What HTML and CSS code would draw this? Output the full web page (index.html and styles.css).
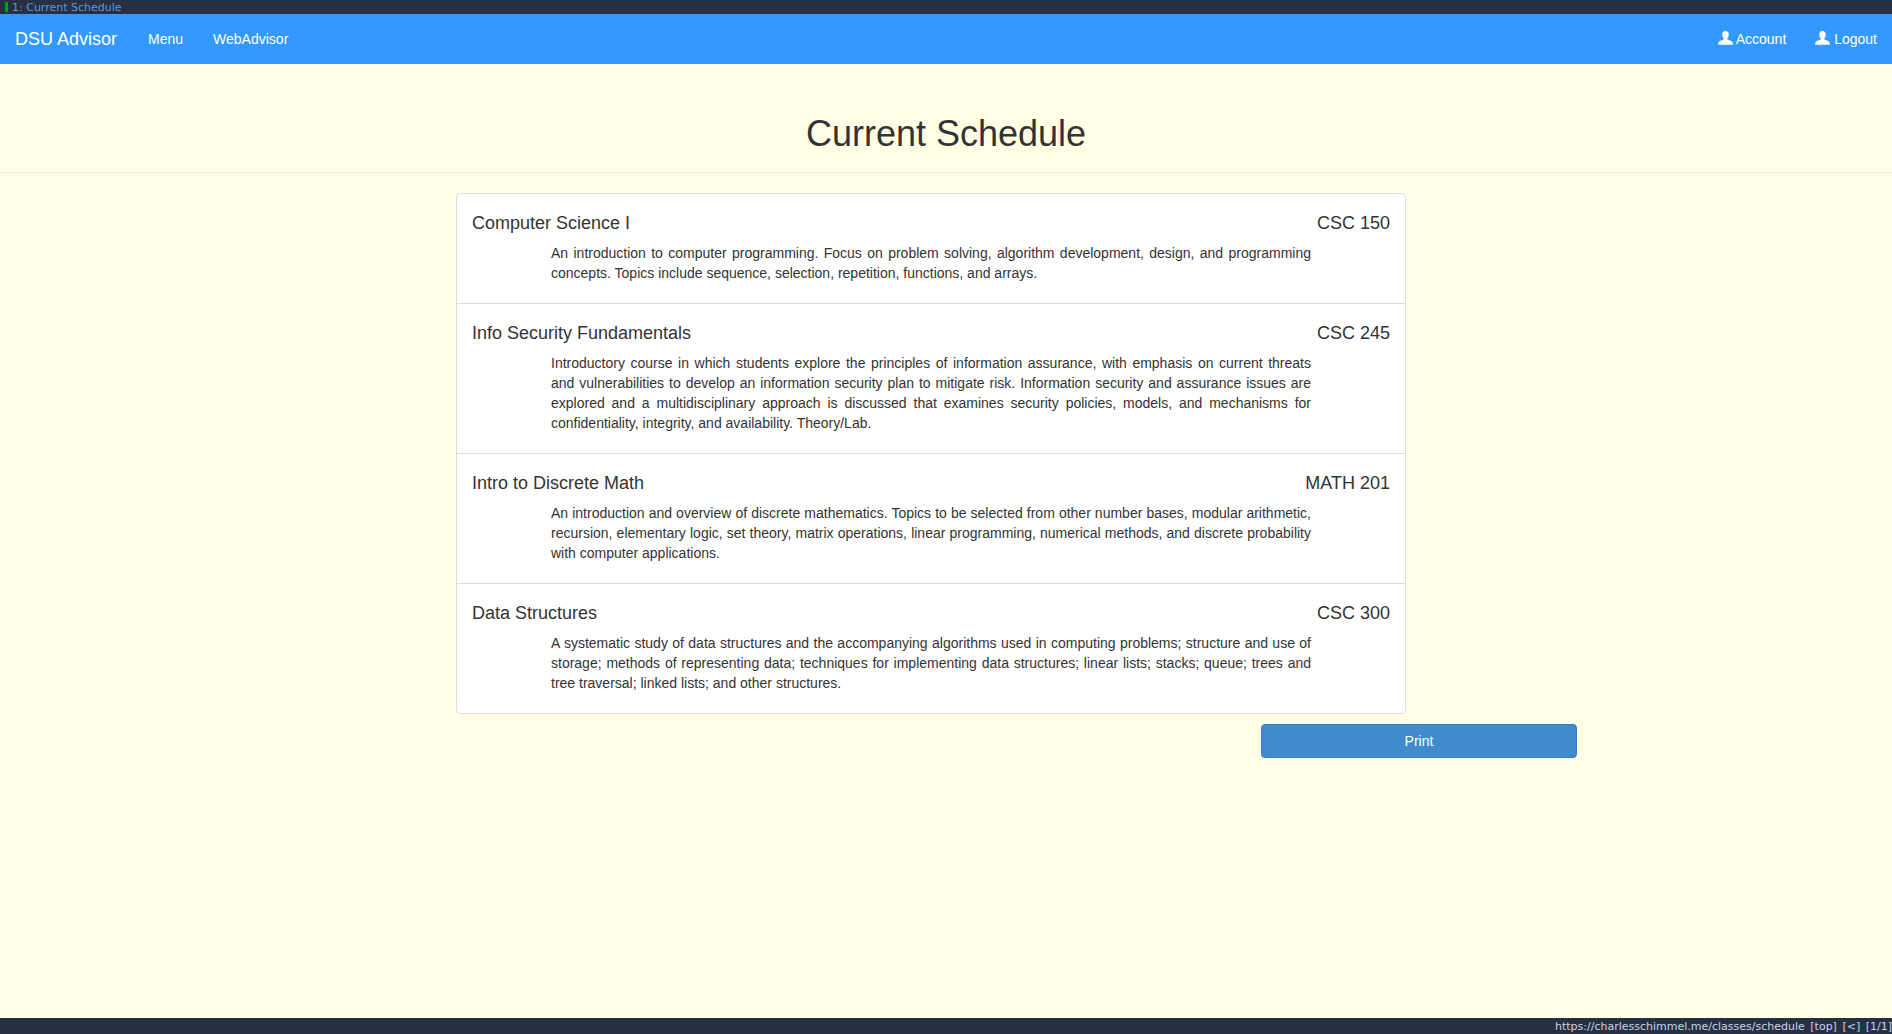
FILE: index.html
```html
<!DOCTYPE html>
<html lang="en">
<head>
<meta charset="utf-8">
<title>Current Schedule</title>
<link rel="stylesheet" href="styles.css">
</head>
<body>
<div class="tabbar"><span class="tab-mark"></span><span class="tab-title">1: Current Schedule</span></div>
<nav class="navbar">
  <a class="brand">DSU Advisor</a>
  <a class="nav-link">Menu</a>
  <a class="nav-link">WebAdvisor</a>
  <span class="nav-spacer"></span>
  <a class="nav-link"><svg class="user-icon" viewBox="0 0 15 14"><path d="M7.500 0C5.500 0 4.200 1.400 4.200 3.600c0 1.500.6 2.900 1.500 3.700.2.500.1 1-.3 1.300C4 9.500 1.100 9.900.4 11.400L0 13.800h15l-.4-2.400c-.7-1.500-3.600-1.900-5-2.800-.4-.3-.5-.8-.3-1.300.9-.8 1.500-2.200 1.500-3.700C10.800 1.400 9.500 0 7.500 0z"/></svg> Account</a>
  <a class="nav-link"><svg class="user-icon" viewBox="0 0 15 14"><path d="M7.500 0C5.500 0 4.200 1.400 4.200 3.600c0 1.500.6 2.900 1.500 3.700.2.500.1 1-.3 1.300C4 9.500 1.100 9.900.4 11.400L0 13.800h15l-.4-2.400c-.7-1.500-3.600-1.900-5-2.800-.4-.3-.5-.8-.3-1.300.9-.8 1.500-2.200 1.500-3.700C10.800 1.400 9.500 0 7.500 0z"/></svg> Logout</a>
</nav>
<header class="page-header"><h1>Current Schedule</h1></header>
<main class="content">
  <ul class="course-list">
    <li class="course">
      <div class="course-head"><h4>Computer Science I</h4><h4>CSC 150</h4></div>
      <p>An introduction to computer programming. Focus on problem solving, algorithm development, design, and programming concepts. Topics include sequence, selection, repetition, functions, and arrays.</p>
    </li>
    <li class="course">
      <div class="course-head"><h4>Info Security Fundamentals</h4><h4>CSC 245</h4></div>
      <p>Introductory course in which students explore the principles of information assurance, with emphasis on current threats and vulnerabilities to develop an information security plan to mitigate risk. Information security and assurance issues are explored and a multidisciplinary approach is discussed that examines security policies, models, and mechanisms for confidentiality, integrity, and availability. Theory/Lab.</p>
    </li>
    <li class="course">
      <div class="course-head"><h4>Intro to Discrete Math</h4><h4>MATH 201</h4></div>
      <p>An introduction and overview of discrete mathematics. Topics to be selected from other number bases, modular arithmetic, recursion, elementary logic, set theory, matrix operations, linear programming, numerical methods, and discrete probability with computer applications.</p>
    </li>
    <li class="course">
      <div class="course-head"><h4>Data Structures</h4><h4>CSC 300</h4></div>
      <p>A systematic study of data structures and the accompanying algorithms used in computing problems; structure and use of storage; methods of representing data; techniques for implementing data structures; linear lists; stacks; queue; trees and tree traversal; linked lists; and other structures.</p>
    </li>
  </ul>
  <button class="print-btn" type="button">Print</button>
</main>
<footer class="statusbar">https://charlesschimmel.me/classes/schedule [top] [&lt;] [1/1]</footer>
</body>
</html>
```
FILE: styles.css
```css
* { box-sizing: border-box; }
html, body { height: 100%; }
body {
  margin: 0;
  display: flex;
  flex-direction: column;
  background: #ffffe6;
  color: #333;
  font: 14px/20px "Liberation Sans", Arial, sans-serif;
  overflow: hidden;
}
.tabbar {
  height: 14px;
  flex: none;
  display: flex;
  align-items: center;
  padding-left: 5px;
  background: #262f44;
  font: 11px/14px "DejaVu Sans", sans-serif;
  color: #5b9bd5;
}
.tab-title { position: relative; top: 1px; }
.tab-mark { width: 3px; height: 10px; background: #00a000; margin-right: 4px; }
.navbar {
  height: 50px;
  flex: none;
  display: flex;
  align-items: center;
  background: #39f;
  color: #fff;
}
.brand { font-size: 18px; padding: 0 16px 0 15px; }
.nav-link { padding: 0 15px; }
.nav-spacer { flex: 1; }
.user-icon { width: 15px; height: 14px; margin-left: -1px; fill: #fff; vertical-align: -1px; }
.page-header { flex: none; height: 109px; padding-top: 50px; border-bottom: 1px solid #eee; }
h1 { margin: 0; font-size: 36px; font-weight: 500; line-height: 40px; text-align: center; }
.content { flex: 1; padding: 20px 0 0 456px; }
.course-list {
  width: 950px;
  margin: 0;
  padding: 0;
  list-style: none;
  background: #fff;
  border: 1px solid #ddd;
  border-radius: 4px;
}
.course { padding: 10px 15px; border-top: 1px solid #ddd; }
.course:first-child { border-top: 0; }
.course-head { display: flex; justify-content: space-between; }
h4 { margin: 9px 0 10px; font-size: 18px; font-weight: 500; line-height: 20px; }
.course p { width: 760px; margin: 0 0 10px 79px; text-align: justify; }
.print-btn {
  display: block;
  width: 316px;
  height: 34px;
  margin: 10px 0 0 805px;
  background: #428bca;
  border: 1px solid #357ebd;
  border-radius: 4px;
  color: #fff;
  font: inherit;
}
.statusbar {
  flex: none;
  height: 16px;
  padding: 1px 0 0;
  background: #262f44;
  color: #c9d6e6;
  font: 11px/16px "DejaVu Sans", sans-serif;
  text-align: right;
  word-spacing: 2px;
}
```
